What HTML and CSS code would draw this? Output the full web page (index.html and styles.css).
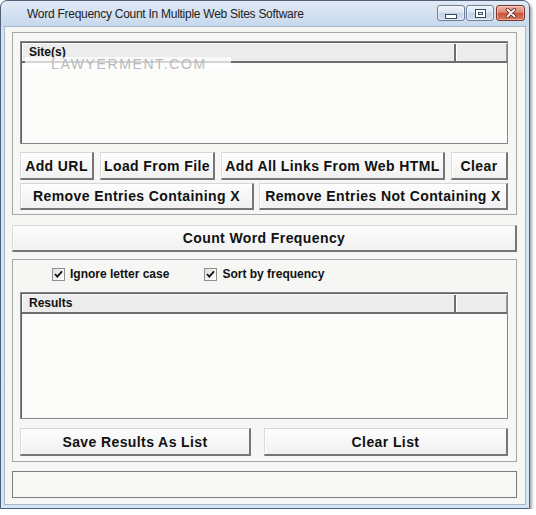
FILE: index.html
```html
<!DOCTYPE html>
<html>
<head>
<meta charset="utf-8">
<title>Word Frequency Count In Multiple Web Sites Software</title>
<link rel="stylesheet" href="styles.css">
</head>
<body>
<div class="window">
  <div class="titlebar">
    <span class="title">Word Frequency Count In Multiple Web Sites Software</span>
    <div class="caption-buttons">
      <span class="cap cap-min"><span class="glyph-min"></span></span>
      <span class="cap cap-max"><span class="glyph-max"><span class="glyph-max-inner"></span></span></span>
      <span class="cap cap-close">
        <svg class="glyph-close" width="14" height="10" viewBox="0 0 14 10">
          <path d="M3.5 1.5 L10.5 8.5 M10.5 1.5 L3.5 8.5" stroke="#5a2419" stroke-width="3.4" stroke-linecap="round" fill="none"/>
          <path d="M3.5 1.5 L10.5 8.5 M10.5 1.5 L3.5 8.5" stroke="#ffffff" stroke-width="1.8" stroke-linecap="round" fill="none"/>
        </svg>
      </span>
    </div>
  </div>
  <div class="client">
    <div class="group group-sites">
      <div class="listbox list-sites">
        <div class="list-header">
          <div class="col col-main">Site(s)</div>
          <div class="col col-extra"></div>
        </div>
        <span class="watermark">LAWYERMENT.COM</span>
      </div>
      <div class="btn-row row-1">
        <button class="btn w-addurl">Add URL</button>
        <button class="btn w-load">Load From File</button>
        <button class="btn w-links">Add All Links From Web HTML</button>
        <button class="btn w-clear">Clear</button>
      </div>
      <div class="btn-row row-2">
        <button class="btn w-remove">Remove Entries Containing X</button>
        <button class="btn w-removenot">Remove Entries Not Containing X</button>
      </div>
    </div>
    <button class="btn btn-wide">Count Word Frequency</button>
    <div class="group group-results">
      <div class="check-row">
        <label class="check check-first"><span class="checkbox"><svg width="11" height="11" viewBox="0 0 11 11"><path d="M2 5 L4.3 7.6 L9 2.4" stroke="#111" stroke-width="1.8" fill="none"/></svg></span>Ignore letter case</label>
        <label class="check"><span class="checkbox"><svg width="11" height="11" viewBox="0 0 11 11"><path d="M2 5 L4.3 7.6 L9 2.4" stroke="#111" stroke-width="1.8" fill="none"/></svg></span>Sort by frequency</label>
      </div>
      <div class="listbox list-results">
        <div class="list-header">
          <div class="col col-main">Results</div>
          <div class="col col-extra"></div>
        </div>
      </div>
      <div class="btn-row row-3">
        <button class="btn w-save">Save Results As List</button>
        <button class="btn w-clearlist">Clear List</button>
      </div>
    </div>
    <div class="statusbar"></div>
  </div>
</div>
</body>
</html>
```
FILE: styles.css
```css
html, body {
  margin: 0;
  padding: 0;
  background: #ffffff;
  font-family: "Liberation Sans", Arial, sans-serif;
}

.window {
  width: 530px;
  height: 509px;
  box-sizing: border-box;
  border: 1px solid #4f6178;
  border-radius: 7px 7px 0 0;
  background: linear-gradient(to bottom, #e1eaf6 0, #c7d8ec 25px, #d3e2f2 26px, #d6e5f4 100%);
  padding: 0 3px 3px 3px;
  display: flex;
  flex-direction: column;
  box-shadow: 2px 3px 3px rgba(0, 0, 0, 0.35);
}

/* Title bar */
.titlebar {
  height: 25px;
  flex: none;
  display: flex;
  align-items: flex-start;
}

.title {
  font-size: 12px;
  line-height: 14px;
  letter-spacing: -0.27px;
  color: #222222;
  margin: 6px 0 0 23px;
  white-space: nowrap;
}

.caption-buttons {
  margin-left: auto;
  margin-top: 4px;
  margin-right: 1px;
  display: flex;
}

.cap {
  width: 28px;
  height: 16px;
  box-sizing: border-box;
  border: 1px solid #6b7e98;
  border-radius: 3px;
  background: linear-gradient(to bottom, #eef3fa 0, #dbe5f1 45%, #c3d3e7 50%, #d0dded 100%);
  box-shadow: inset 0 0 0 1px rgba(255, 255, 255, 0.55);
  display: flex;
  align-items: center;
  justify-content: center;
}

.cap-max {
  margin-left: 1px;
}

.cap-close {
  margin-left: 2px;
  width: 29px;
  border-color: #7d372a;
  background: linear-gradient(to bottom, #eeb3a5 0, #dd8a75 45%, #c9533a 50%, #d87a5e 100%);
  box-shadow: inset 0 0 0 1px rgba(255, 230, 220, 0.45);
}

.glyph-min {
  width: 12px;
  height: 5px;
  box-sizing: border-box;
  border: 1px solid #3a4a60;
  background: #ffffff;
  margin-top: 6px;
}

.glyph-max {
  width: 11px;
  height: 9px;
  box-sizing: border-box;
  border: 1px solid #3a4a60;
  background: #ffffff;
  display: flex;
  align-items: center;
  justify-content: center;
}

.glyph-max-inner {
  width: 5px;
  height: 3px;
  box-sizing: border-box;
  border: 1px solid #3a4a60;
}

/* Client area */
.client {
  flex: 1;
  background: #f6f7f4;
  border: 1px solid #a6b7cc;
  padding: 5px 8px 0 7px;
  display: flex;
  flex-direction: column;
}

.group {
  flex: none;
  border: 1px solid #a6a6a6;
  padding: 8px 8px 4px 7px;
  display: flex;
  flex-direction: column;
}

.group-results {
  margin-top: 7px;
  padding-top: 4px;
  padding-bottom: 5px;
}

/* List boxes */
.listbox {
  position: relative;
  box-sizing: border-box;
  border: 1px solid #868686;
  background: #fbfcfa;
  box-shadow: inset 1px 1px 0 #5f5f5f;
  padding: 1px 0 0 1px;
  flex: none;
}

.list-sites {
  height: 103px;
}

.list-results {
  height: 127px;
  margin-top: 8px;
}

.list-header {
  display: flex;
  height: 20px;
  box-sizing: border-box;
  background: #ececec;
  border-top: 1px solid #ffffff;
  border-bottom: 2px solid #6e6e6e;
}

.col {
  font-size: 12px;
  font-weight: bold;
  line-height: 17px;
  color: #111111;
  box-sizing: border-box;
}

.col-main {
  width: 434px;
  padding-left: 6px;
  border-left: 1px solid #ffffff;
  border-right: 2px solid #6e6e6e;
}

.col-extra {
  flex: 1;
  border-left: 1px solid #ffffff;
  border-right: 1px solid #9a9a9a;
}

.watermark {
  position: absolute;
  left: 4px;
  top: 15px;
  height: 13px;
  padding: 0 24px 0 26px;
  background: rgba(255, 255, 255, 0.7);
  color: #b9b9b9;
  font-size: 14px;
  line-height: 15px;
  letter-spacing: 1.6px;
  white-space: nowrap;
}

/* Buttons */
.btn-row {
  display: flex;
  justify-content: space-between;
  flex: none;
}

.row-1 {
  margin-top: 8px;
}

.row-2 {
  margin-top: 3px;
}

.row-3 {
  margin-top: 9px;
}

.btn {
  box-sizing: border-box;
  height: 28px;
  margin: 0;
  padding: 0;
  font-family: "Liberation Sans", Arial, sans-serif;
  font-size: 14px;
  font-weight: bold;
  letter-spacing: 0.4px;
  color: #111111;
  white-space: nowrap;
  background: linear-gradient(to bottom, #fdfdfd 0, #f1f1f1 100%);
  border-style: solid;
  border-width: 1px 2px 2px 1px;
  border-color: #d6d6d6 #767676 #767676 #dcdcdc;
  box-shadow: inset 1px 1px 0 #ffffff;
}

.row-2 .btn {
  height: 27px;
}

.w-addurl { width: 74px; }
.w-load { width: 115px; }
.w-links { width: 224px; }
.w-clear { width: 57px; }
.w-remove { width: 234px; }
.w-removenot { width: 249px; }
.w-save { width: 231px; }
.w-clearlist { width: 244px; }

.btn-wide {
  flex: none;
  width: 100%;
  height: 27px;
  margin-top: 10px;
}

/* Check boxes */
.check-row {
  height: 20px;
  display: flex;
  align-items: center;
  padding-left: 32px;
  flex: none;
}

.check {
  display: flex;
  align-items: center;
  gap: 5px;
  font-size: 12px;
  font-weight: bold;
  color: #111111;
}

.check-first {
  margin-right: 35px;
}

.checkbox {
  width: 13px;
  height: 13px;
  box-sizing: border-box;
  border: 1px solid #8e8e8e;
  background: linear-gradient(135deg, #dedede 0, #ffffff 100%);
  display: flex;
  align-items: center;
  justify-content: center;
}

/* Status bar */
.statusbar {
  flex: none;
  margin-top: 9px;
  height: 27px;
  box-sizing: border-box;
  border: 1px solid #7c7c7c;
  background: #f8f9f7;
}
```
